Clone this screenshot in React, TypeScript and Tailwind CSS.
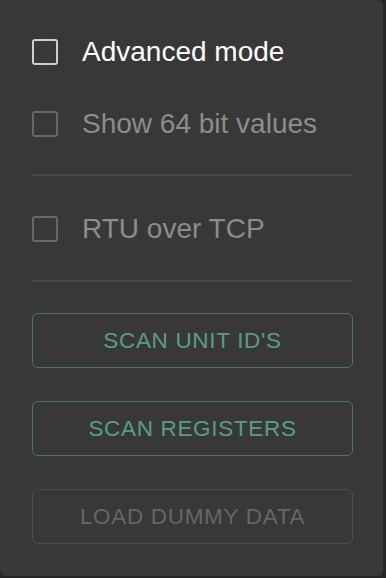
import React from "react";

function Box({ dim }: { dim?: boolean }) {
  return (
    <span
      className={`block h-[26px] w-[26px] shrink-0 rounded-[3px] border-[2.5px] ${
        dim ? "border-[#676767]" : "border-[#cfcfcf]"
      }`}
    />
  );
}

function Option({ label, dim }: { label: string; dim?: boolean }) {
  return (
    <label className="flex h-[72px] items-center gap-[24px] pl-[32px] pr-[30px]">
      <Box dim={dim} />
      <span
        className={`text-[28px] leading-none ${
          dim ? "text-[#8c8c8c]" : "text-white"
        }`}
      >
        {label}
      </span>
    </label>
  );
}

function Action({ label, dim }: { label: string; dim?: boolean }) {
  return (
    <button
      className={`flex h-[55px] w-full items-center justify-center rounded-[6px] border-[1.5px] text-[22.5px] uppercase tracking-[0.03em] ${
        dim
          ? "border-[#4e4e4e] text-[#666666]"
          : "border-[#4a7a63] text-[#5a9e80]"
      }`}
    >
      {label}
    </button>
  );
}

export default function App() {
  return (
    <div
      className="h-[578px] w-[386px] bg-[#262626]"
      style={{ fontFamily: '"Liberation Sans", Arial, sans-serif' }}
    >
      <div className="flex h-[576px] w-[383px] flex-col rounded-tr-[6px] rounded-b-[6px] bg-[#383838] pt-[16px]">
        <Option label="Advanced mode" />
        <Option label="Show 64 bit values" dim />
        <div className="ml-[32px] mr-[30px] mt-[14px] mb-[17px] h-[2px] bg-[#484848]" />
        <Option label="RTU over TCP" dim />
        <div className="ml-[32px] mr-[30px] mt-[15px] h-[2px] bg-[#484848]" />
        <div className="flex flex-col gap-[33px] pl-[32px] pr-[30px] pt-[31px]">
          <Action label="Scan unit ID's" />
          <Action label="Scan registers" />
          <Action label="Load dummy data" dim />
        </div>
      </div>
    </div>
  );
}
